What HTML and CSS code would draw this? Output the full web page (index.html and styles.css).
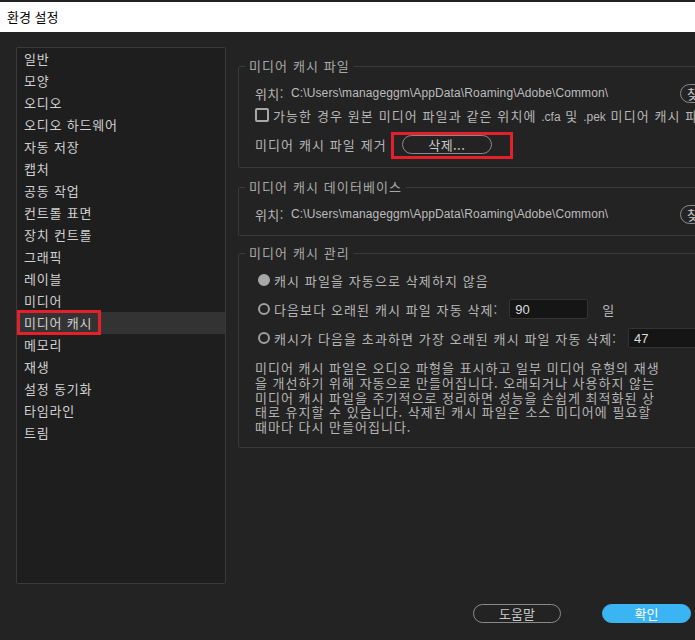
FILE: index.html
```html
<!DOCTYPE html>
<html lang="ko">
<head>
  <meta charset="UTF-8">
  <title>환경 설정</title>
  <link rel="stylesheet" href="styles.css">
</head>
<body>

  <div class="titlebar">환경 설정</div>

  <div class="main">
    <ul class="nav">
      <li>일반</li>
      <li>모양</li>
      <li>오디오</li>
      <li>오디오 하드웨어</li>
      <li>자동 저장</li>
      <li>캡처</li>
      <li>공동 작업</li>
      <li>컨트롤 표면</li>
      <li>장치 컨트롤</li>
      <li>그래픽</li>
      <li>레이블</li>
      <li>미디어</li>
      <li class="active">미디어 캐시<span class="mark mark-nav"></span></li>
      <li>메모리</li>
      <li>재생</li>
      <li>설정 동기화</li>
      <li>타임라인</li>
      <li>트림</li>
    </ul>

    <div class="panel">
      <fieldset class="group group-files">
        <legend>미디어 캐시 파일</legend>
        <div class="row">
          <span class="label">위치:</span>
          <span class="path">C:\Users\manageggm\AppData\Roaming\Adobe\Common\</span>
          <button class="btn btn-browse">찾아보기...</button>
        </div>
        <div class="row">
          <span class="checkbox"></span>
          <span>가능한 경우 원본 미디어 파일과 같은 위치에 <span class="latin">.cfa</span> 및 <span class="latin">.pek</span> 미디어 캐시 파일 저장</span>
        </div>
        <div class="row row-delete">
          <span>미디어 캐시 파일 제거</span>
          <span class="btn-wrap">
            <button class="btn btn-delete">삭제...</button>
            <span class="mark mark-delete"></span>
          </span>
        </div>
      </fieldset>

      <fieldset class="group group-db">
        <legend>미디어 캐시 데이터베이스</legend>
        <div class="row">
          <span class="label">위치:</span>
          <span class="path">C:\Users\manageggm\AppData\Roaming\Adobe\Common\</span>
          <button class="btn btn-browse">찾아보기...</button>
        </div>
      </fieldset>

      <fieldset class="group group-manage">
        <legend>미디어 캐시 관리</legend>
        <div class="row radio-row">
          <span class="radio checked"></span>
          <span>캐시 파일을 자동으로 삭제하지 않음</span>
        </div>
        <div class="row radio-row">
          <span class="radio"></span>
          <span>다음보다 오래된 캐시 파일 자동 삭제:</span>
          <input class="num num-days" type="text" value="90">
          <span class="unit">일</span>
        </div>
        <div class="row radio-row">
          <span class="radio"></span>
          <span>캐시가 다음을 초과하면 가장 오래된 캐시 파일 자동 삭제:</span>
          <input class="num num-size" type="text" value="47">
        </div>
        <p class="note">미디어 캐시 파일은 오디오 파형을 표시하고 일부 미디어 유형의 재생을 개선하기 위해 자동으로 만들어집니다. 오래되거나 사용하지 않는 미디어 캐시 파일을 주기적으로 정리하면 성능을 손쉽게 최적화된 상태로 유지할 수 있습니다. 삭제된 캐시 파일은 소스 미디어에 필요할 때마다 다시 만들어집니다.</p>
      </fieldset>
    </div>
  </div>

  <div class="footer">
    <button class="btn btn-help">도움말</button>
    <button class="btn btn-ok">확인</button>
  </div>

</body>
</html>
```

FILE: styles.css
```css
body { margin: 0; width: 695px; height: 640px; overflow: hidden; background: #232323; color: #b6b6b6; font-family: "Noto Sans CJK KR", sans-serif; font-size: 13px; }
.titlebar { margin-top: 2px; height: 30px; line-height: 30px; padding-left: 7px; background: #fff; color: #000; font-size: 13px; }

.main { display: flex; gap: 12px; height: 537px; padding: 15px 0 0 16px; }
.nav { list-style: none; margin: 0; padding: 0; width: 208px; flex: none; background: #1e1e1e; border: 1px solid #3a3a3a; border-radius: 2px; }
.nav li { position: relative; height: 22px; line-height: 22px; padding-left: 7px; color: #d0d0d0; letter-spacing: 0.8px; }
.nav li.active { background: #333; }

.mark { position: absolute; border: 3px solid #e3202b; box-sizing: border-box; }
.mark-nav { left: 0; top: -2px; width: 84px; height: 25px; }
.mark-delete { left: -11px; top: -3px; width: 122px; height: 27px; }

.panel { flex: none; width: 480px; padding-top: 11px; }
.group { margin: 0 0 11px; padding: 0 0 12px 6px; border: 1px solid #3a3a3a; border-radius: 2px; }
.group legend { padding: 0 4px; color: #a8a8a8; letter-spacing: 1.1px; line-height: 16px; }
.row { display: flex; align-items: center; height: 22px; margin-left: 10px; white-space: nowrap; letter-spacing: 1.1px; }
.label { width: 36px; letter-spacing: 0.4px; }
.path { font-family: "Liberation Sans", sans-serif; font-size: 12px; letter-spacing: 0.12px; color: #bcbcbc; width: 389px; }
.latin { font-family: "Liberation Sans", sans-serif; font-size: 12px; letter-spacing: 0; }

.group-files .row:first-of-type { margin-top: 8px; }
.row-delete { margin-top: 7px; }
.group-db .row { margin-top: 8px; }
.group-db { padding-bottom: 10px; margin-bottom: 9px; }

.btn { font-family: "Noto Sans CJK KR", sans-serif; font-size: 13px; height: 19px; padding: 0; border-radius: 10px; cursor: pointer; line-height: 17px; }
.btn-browse { background: transparent; border: 1px solid #8a8a8a; color: #c8c8c8; width: 80px; text-align: left; padding-left: 6px; }
.btn-wrap { position: relative; margin-left: 15px; }
.btn-delete { background: transparent; border: 1px solid #8a8a8a; color: #c8c8c8; width: 90px; letter-spacing: 0.4px; }

.checkbox { width: 10px; height: 10px; border: 2px solid #a8a8a8; border-radius: 2px; margin-right: 4px; }
.radio { width: 8px; height: 8px; border: 2px solid #a0a0a0; border-radius: 50%; margin: 0 4px 0 3px; }
.radio.checked { background: #a8a8a8; border-color: #a8a8a8; }
.group-manage .row:first-of-type { margin-top: 8px; }
.radio-row + .radio-row { margin-top: 7px; }
.num { box-sizing: border-box; height: 20px; background: #151515; border: 1px solid #333; border-radius: 2px; color: #dcdcdc; font-family: "Liberation Sans", sans-serif; font-size: 13px; padding: 0 5px; }
.num-days { width: 79px; margin-left: 11px; }
.num-size { width: 79px; margin-left: 11px; }
.unit { margin-left: 14px; }
.note { width: 412px; margin: 12px 0 0 10px; line-height: 14.8px; letter-spacing: 1px; color: #b4b4b4; }

.footer { display: flex; justify-content: flex-end; gap: 41px; padding: 20px 4px 0 0; }
.btn-help { width: 88px; background: transparent; border: 1px solid #8a8a8a; color: #c8c8c8; }
.btn-ok { width: 89px; background: #3ab4f2; border: 1px solid #3ab4f2; color: #fff; }
```
